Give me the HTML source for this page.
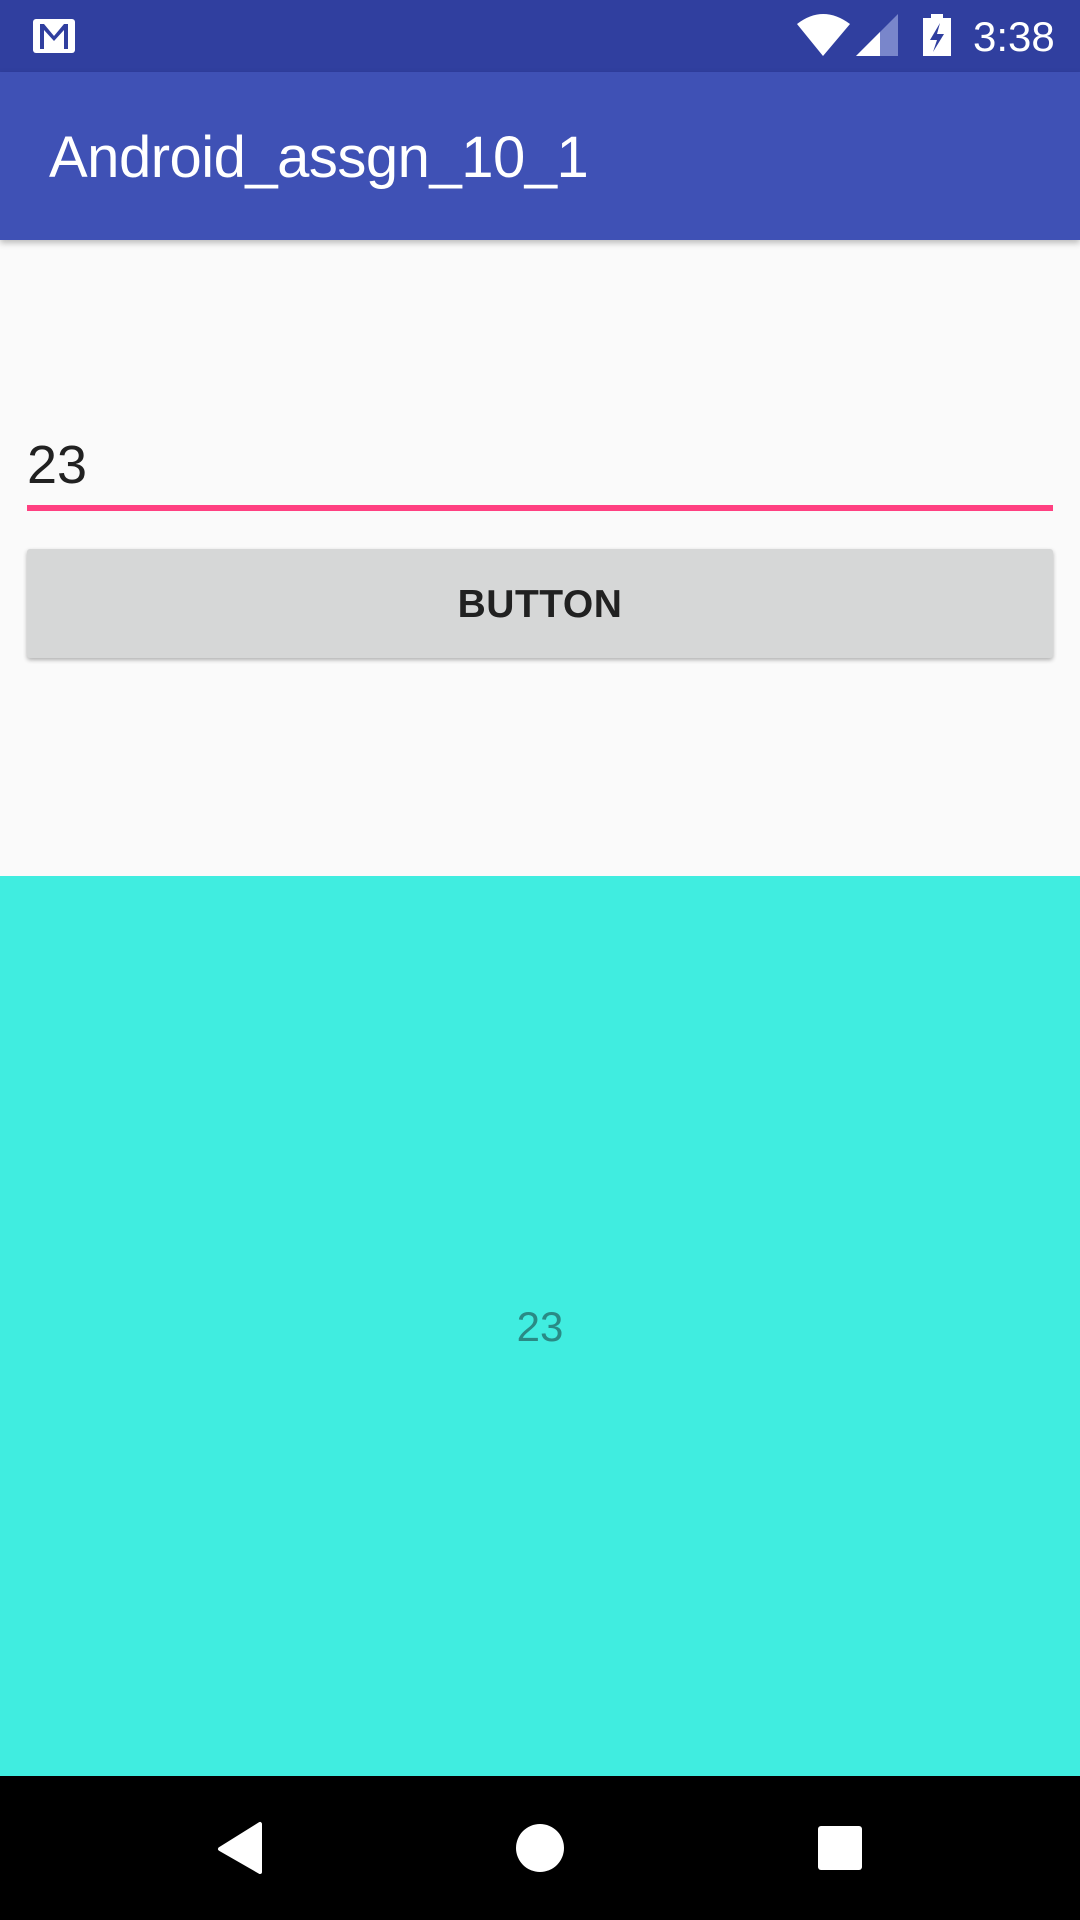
<!DOCTYPE html>
<html><head><meta charset="utf-8"><style>
*{margin:0;padding:0;box-sizing:border-box}
body{width:1080px;height:1920px;background:#fafafa;font-family:"Liberation Sans",sans-serif;position:relative;overflow:hidden}
.abs{position:absolute}
</style></head><body>
<div class="abs" style="left:0;top:0;width:1080px;height:72px;background:#303F9F"></div>
<svg class="abs" style="left:0;top:0" width="1080" height="72">
<rect x="33" y="19" width="42" height="34" rx="3" fill="#fff"/>
<path d="M40 49V24h4l10 12 10-12h4v25h-4V30l-10 11-10-11v19z" fill="#303F9F"/>
<path d="M797 24 Q823 4 850 24 L823 56 Z" fill="#fff"/>
<path d="M856 56 L898 14 L898 56 Z" fill="#7986CB"/>
<path d="M856 56 L880 32 L880 56 Z" fill="#fff"/>
<rect x="931" y="14" width="12" height="5" fill="#fff"/>
<rect x="923" y="18" width="28" height="38" fill="#fff"/>
<path d="M940 23 L930 40 L937 40 L933 52 L944 34 L937 34 Z" fill="#303F9F"/>
<text x="973" y="51" font-size="42" fill="#fff" font-family="Liberation Sans">3:38</text>
</svg>
<div class="abs" style="left:0;top:72px;width:1080px;height:168px;background:#3F51B5;box-shadow:0 3px 6px rgba(0,0,0,0.25)"></div>
<div class="abs" style="left:49px;top:123px;font-size:58px;color:#fff;line-height:70px;letter-spacing:-0.5px">Android_assgn_10_1</div>
<div class="abs" style="left:27px;top:430px;font-size:54px;color:#212121;line-height:70px">23</div>
<div class="abs" style="left:27px;top:505px;width:1026px;height:6px;background:#FF4081"></div>
<div class="abs" style="left:27px;top:549px;width:1026px;height:109px;background:#d6d7d7;border-radius:3px;box-shadow:0 2px 4px rgba(0,0,0,0.3);text-align:center;line-height:111px;font-size:39px;font-weight:bold;color:#212121;letter-spacing:0.5px">BUTTON</div>
<div class="abs" style="left:0;top:876px;width:1080px;height:900px;background:#40EDE0"></div>
<div class="abs" style="left:0;top:1302px;width:1080px;text-align:center;font-size:42px;color:#2a8a85;line-height:50px">23</div>
<div class="abs" style="left:0;top:1776px;width:1080px;height:144px;background:#000"></div>
<svg class="abs" style="left:0;top:1776px" width="1080" height="144">
<path d="M260 48 L260 96 L220 73 Z" fill="#fff" stroke="#fff" stroke-width="4" stroke-linejoin="round"/>
<circle cx="540" cy="72" r="24" fill="#fff"/>
<rect x="818" y="50" width="44" height="44" rx="3" fill="#fff"/>
</svg>
</body></html>
